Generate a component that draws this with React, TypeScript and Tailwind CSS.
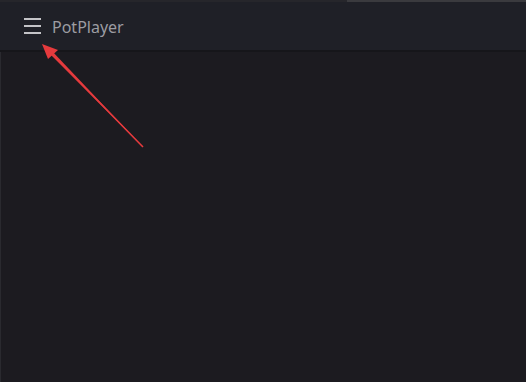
export default function App() {
  return (
    <div className="relative w-[526px] h-[382px] bg-[#1c1b20] overflow-hidden flex flex-col" style={{ fontFamily: '"Noto Sans", "Open Sans", sans-serif' }}>
      <div className="flex h-[2px] shrink-0">
        <div className="w-[347px] bg-[#26262b]" />
        <div className="flex-1 bg-[#3a3a3e]" />
      </div>
      <div className="h-[50px] shrink-0 bg-[#1f2027] border-b-2 border-[#16161a] flex items-center pl-[24px]">
        <div className="flex flex-col gap-[5px] w-[17px]">
          <div className="h-[2px] bg-[#c4c4c8]" />
          <div className="h-[2px] bg-[#c4c4c8]" />
          <div className="h-[2px] bg-[#c4c4c8]" />
        </div>
        <span className="ml-[11px] mt-[2px] text-[16px] text-[#9c9ca2] leading-none">PotPlayer</span>
      </div>
      <div className="flex-1 border-l border-[#2a2a2f]" />
      <svg className="absolute left-0 top-0" width="526" height="382">
        <polygon points="143,147 51,50 49,53" fill="#e53a3d" />
        <line x1="143" y1="147" x2="52" y2="54" stroke="#e53a3d" strokeWidth="1.6" />
        <polygon points="42,44 58,50 48,59" fill="#e53a3d" />
      </svg>
    </div>
  );
}
